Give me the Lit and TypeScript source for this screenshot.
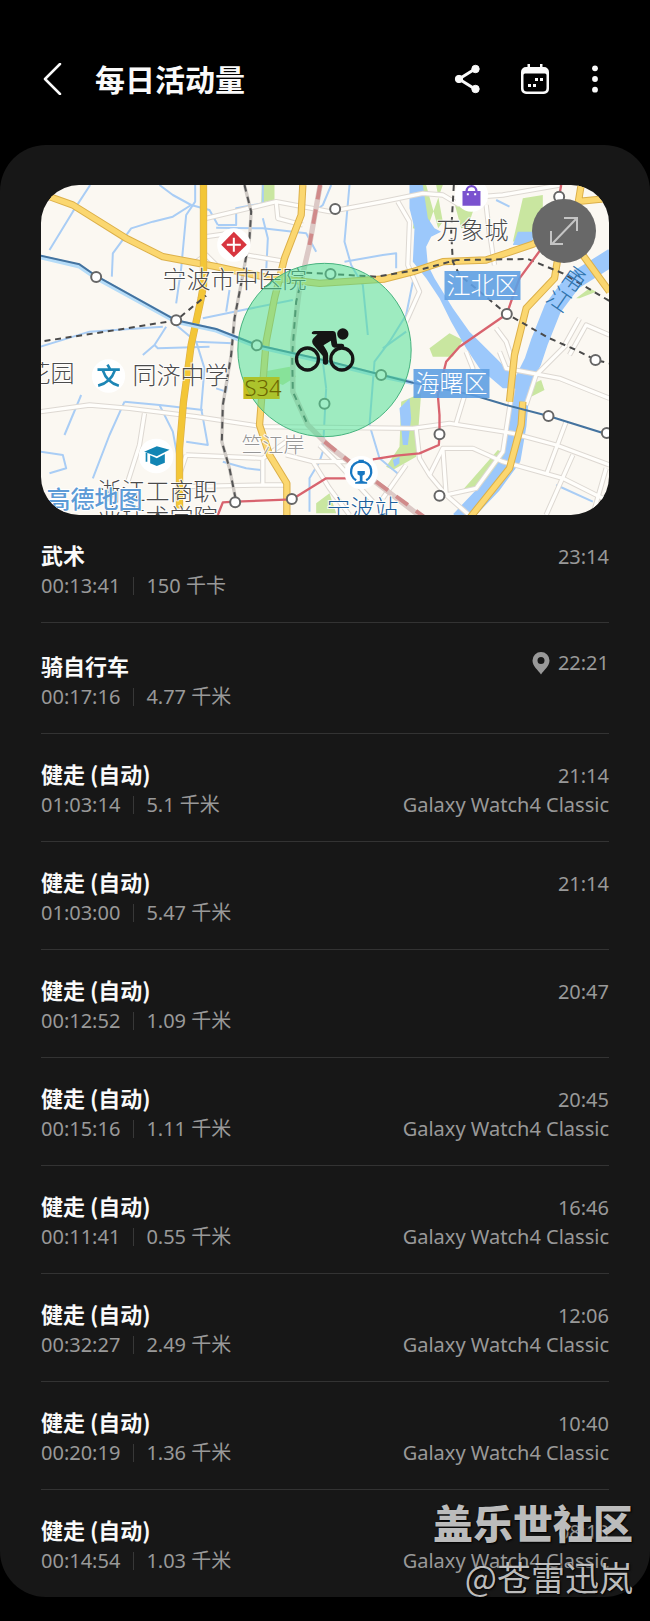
import { LitElement, html, css, svg, nothing } from "lit";
import { customElement, property } from "lit/decorators.js";

interface Activity {
  name: string;
  duration: string;
  amount: string;
  time: string;
  device?: string;
  located?: boolean;
}

const WATCH = "Galaxy Watch4 Classic";
const WALK = "健走 (自动)";

const ACTIVITIES: Activity[] = [
  { name: "武术", duration: "00:13:41", amount: "150 千卡", time: "23:14" },
  { name: "骑自行车", duration: "00:17:16", amount: "4.77 千米", time: "22:21", located: true },
  { name: WALK, duration: "01:03:14", amount: "5.1 千米", time: "21:14", device: WATCH },
  { name: WALK, duration: "01:03:00", amount: "5.47 千米", time: "21:14" },
  { name: WALK, duration: "00:12:52", amount: "1.09 千米", time: "20:47" },
  { name: WALK, duration: "00:15:16", amount: "1.11 千米", time: "20:45", device: WATCH },
  { name: WALK, duration: "00:11:41", amount: "0.55 千米", time: "16:46", device: WATCH },
  { name: WALK, duration: "00:32:27", amount: "2.49 千米", time: "12:06", device: WATCH },
  { name: WALK, duration: "00:20:19", amount: "1.36 千米", time: "10:40", device: WATCH },
  { name: WALK, duration: "00:14:54", amount: "1.03 千米", time: "08:18", device: WATCH },
];

@customElement("activity-map")
export class ActivityMap extends LitElement {
  static styles = css`
    :host {
      display: block;
      position: relative;
      overflow: hidden;
      border-radius: 38px;
      background: #fbf8f2;
      aspect-ratio: 568 / 330;
    }
    .map {
      display: block;
      width: 100%;
      height: 100%;
    }
    .river { fill: #9cc8fb; }
    .flow { fill: none; stroke: #9cc8fb; stroke-width: 52; stroke-linejoin: round; }
    .park { fill: #c9e6a0; }
    .stream { fill: none; stroke: #a9cdf5; stroke-width: 6; stroke-linejoin: round; }
    .lane-edge { fill: none; stroke: #ddd8d2; stroke-width: 16; stroke-linejoin: round; }
    .lane { fill: none; stroke: #fffefb; stroke-width: 10; stroke-linejoin: round; }
    .road-edge { fill: none; stroke: #dcb04a; stroke-width: 22; stroke-linejoin: round; }
    .road { fill: none; stroke: #fbd770; stroke-width: 16; stroke-linejoin: round; }
    .road-strong { fill: none; stroke: #f3c636; stroke-width: 18; stroke-linejoin: round; }
    .rail-edge { fill: none; stroke: #cfcac5; stroke-width: 10; }
    .rail { fill: none; stroke: #555; stroke-width: 6; stroke-dasharray: 20 16; }
    .rail-red-edge { fill: none; stroke: #dcc9c6; stroke-width: 16; }
    .rail-red { fill: none; stroke: #d08a8a; stroke-width: 12; stroke-dasharray: 44 30; }
    .metro-blue-edge { fill: none; stroke: #b5dcf8; stroke-width: 14; }
    .metro-blue { fill: none; stroke: #44739f; stroke-width: 6; stroke-linejoin: round; }
    .metro-red { fill: none; stroke: #d8636e; stroke-width: 7; stroke-linejoin: round; }
    .metro-dash { fill: none; stroke: #4a4a4a; stroke-width: 6; stroke-dasharray: 18 14; }
    .stop { fill: #fff; stroke: #666; stroke-width: 6; }
    .badge { fill: #fff; }
    .range { fill: #4cdf94; fill-opacity: 0.53; stroke: #45b27d; stroke-width: 3; }
    .rider { fill: #151515; }
    .wheel { fill: none; stroke: #151515; stroke-width: 10; }
    text {
      font-family: "Noto Sans CJK SC", sans-serif;
      font-size: 24px;
      font-weight: 300;
      fill: #4b4b4b;
      paint-order: stroke;
      stroke: #fff;
      stroke-opacity: 0.8;
      stroke-width: 2px;
    }
    .district { fill: #fff; stroke: none; }
    .district-box { fill: #5e9fe2; fill-opacity: 0.9; }
    .place { font-size: 21px; fill: #969696; }
    .station { fill: #1b5f9c; }
    .water { fill: #2f73ac; stroke: none; }
    .route { font-family: "Noto Sans", sans-serif; font-size: 22px; fill: #6b6500; stroke: none; }
    .brand { font-weight: 500; fill: #5d9bd6; stroke-opacity: 1; }
    .expand {
      position: absolute;
      top: 14px;
      right: 13px;
      width: 64px;
      height: 64px;
      padding: 0;
      border: 0;
      border-radius: 50%;
      background: #686868;
      color: #c4c4c4;
    }
    .expand svg { display: block; width: 64px; height: 64px; }
  `;

  private streams = [
    "M182 30L130 110L60 225", "M390 30L430 60L485 90L540 105L565 150", "M497 30L497 80L470 120L455 280L440 385",
    "M485 90L430 125L370 140L305 160L250 235L247 305", "M565 150L620 150L620 100L700 85L700 30",
    "M560 158L700 160L830 175L860 230", "M700 130L715 190L710 290", "M600 345L590 410", "M520 430L640 405L790 375",
    "M33 515L180 470L400 455", "M410 455L375 510L340 540", "M440 450L500 500L610 505", "M500 500L525 580L515 700L535 810L470 800",
    "M375 510L385 520L540 515", "M155 660L105 780", "M285 680L240 780L190 910", "M285 680L390 690L430 770L445 850",
    "M390 690L520 705", "M33 830L100 840L110 880L60 895", "M580 860L650 880L695 885L695 920", "M560 640L590 650L600 560",
    "M905 30L880 90L855 110", "M960 30L945 200L965 270L1000 330L1015 480", "M945 260L1060 240L1100 235L1100 280",
    "M1150 320L1130 420L1080 500L1035 560L1020 750L1050 850L1110 900", "M1060 520L1130 470", "M890 640L880 830L870 860",
    "M870 860L840 910L840 1010", "M880 560L890 640", "M1400 75L1440 95", "M1580 930L1690 980",
  ];

  private lanes = [
    "M530 130L740 80L900 110L1060 80L1180 55L1240 60L1290 90", "M740 80L745 130L820 150", "M530 185L600 175M650 240L770 260",
    "M1105 80L1140 140L1135 270L1170 350L1130 440", "M1290 70L1420 60L1590 30", "M1370 90L1380 180M1395 270L1380 170",
    "M33 710L180 690L300 700L500 725L700 755L1150 760L1260 745L1450 775L1580 810L1740 870", "M345 715L330 810L295 920",
    "M470 840L700 850L770 800M470 840L450 900M700 850L700 930L460 935M700 930L780 930", "M870 810L930 870L1030 980",
    "M770 840L850 860L900 940L960 1020", "M850 860L960 860M1060 970L1130 870", "M1160 760L1170 850L1200 900L1250 960",
    "M1200 900L1240 820L1330 820L1420 860L1600 910L1740 980", "M1250 960L1330 1030M1250 960L1240 820M1250 960L1340 940L1420 830L1440 700L1450 640",
    "M1410 530L1430 580L1590 610L1740 670", "M1310 530L1330 580L1280 745", "M1610 510L1520 600L1490 690", "M1400 460L1430 500L1450 560",
    "M1610 740L1550 900M1630 840L1550 1020M1730 880L1690 1020M1620 540L1670 450L1740 480M1600 520L1650 430", "M500 260L530 240L560 270",
  ];

  private art() {
    return svg`
      <g transform="translate(-11 -10) scale(0.33333)">
        <path class="park" d="M697 30h38v45l-40 8zM1190 30l30 0 20 110-14 20zM1240 30L1170 30 1150 160 1190 170zM1275 85l65-5-25 75-20 5zM1480 70l60-10v130h-60l-30 10zM1200 520l60-45 40 20-30 50-60 0zM1115 680l60-25-15 190-70 40-20-10 40-60zM1295 950l110-125 40 20-80 80zM1640 370l40-30 20 10-50 20zM1490 635l45-20 10 30-40 20zM860 985l40-30 20 60h-60zM700 590l80-15 20 30-40 25-50-20z"/>
        <path class="river" d="M1140 30L1180 30 1195 130 1215 160 1235 170 1205 185 1190 215 1195 270 1215 310 1270 400 1320 470 1400 550 1460 610 1480 640 1420 640 1350 580 1310 520 1265 440 1230 370 1190 310 1150 260 1155 160 1140 100z"/>
        <path class="flow" d="M1750 245L1630 320 1570 400 1530 500 1510 560 1475 630 1465 750 1448 850 1390 930 1290 1035"/>
        <path class="river" d="M1465 170h45v40h-60zM1110 700l30-30 5 60-10 80-15 0zM1090 855l20-10v20l-15 10z"/>
        ${this.streams.map((d) => svg`<path class="stream" d=${d}/>`)}
        ${this.lanes.map((d) => svg`<path class="lane-edge" d=${d}/>`)}
        ${this.lanes.map((d) => svg`<path class="lane" d=${d}/>`)}
        <path class="rail-edge" d="M645 30L665 110 660 190 640 300 615 430 605 540 580 690 577 800 600 880 620 980"/>
        <path class="rail" d="M645 30L665 110 660 190 640 300 615 430 605 540 580 690 577 800 600 880 620 980"/>
        <path class="rail-red-edge" d="M872 30L840 210 810 340 790 500 790 650 835 750 900 815 1180 1030"/>
        <path class="rail-red" d="M872 30L840 210M885 800L960 860M1040 920L1190 1030"/>
        <path class="rail" d="M820 300L800 380 788 540 790 650 835 750"/>
        <path class="road-edge" d="M60 65L130 90 290 190 400 245 560 275 700 305 870 325 1065 312 1150 290 1240 260 1370 255 1510 208 1560 170M820 30L815 120 765 250 735 370 710 500 690 750 720 840 772 925 772 1030M1740 350L1660 240M1655 30L1640 120 1590 220 1575 310 1490 400 1455 540 1440 680M1480 680L1475 750 1440 880 1320 1030M1640 80L1740 70"/>
        <path class="road" d="M60 65L130 90 290 190 400 245 560 275 700 305 870 325 1065 312 1150 290 1240 260 1370 255 1510 208 1560 170M820 30L815 120 765 250 735 370 710 500 690 750 720 840 772 925 772 1030M1740 350L1660 240M1655 30L1640 120 1590 220 1575 310 1490 400 1455 540 1440 680M1480 680L1475 750 1440 880 1320 1030M1640 80L1740 70"/>
        <path class="road-edge" d="M522 30L522 330 515 370 485 510 462 680 450 820 450 1000"/>
        <path class="road-strong" d="M522 30L522 330 515 370 485 510 462 680 450 820 450 1000"/>
        <path class="metro-blue-edge" d="M33 246L150 274 200 308 440 440 560 466 682 514 885 560 1055 603 1150 623"/>
        <path class="metro-blue" d="M33 242L150 268 200 303 440 436 560 462 682 510 885 556 1055 599 1150 623 1330 660 1430 690 1557 723 1740 780"/>
        <path class="metro-dash" d="M45 498L260 465 440 436 530 362M830 293L890 296 1040 305 1180 282 1280 255 1495 252 1600 295 1740 378M1273 30L1265 170 1270 260 1290 300 1432 417 1560 490 1640 525 1698 555 1740 565"/>
        <path class="metro-red" d="M1595 30L1589 65M1540 215L1470 310 1455 350 1432 417 1290 515 1250 560 1225 660 1230 720 1230 778 1228 810 1170 835 1100 842 1030 853M960 910L890 910 788 973 617 980 580 982 565 1020"/>
        ${[[200, 306], [440, 436], [682, 511], [917, 102], [903, 297], [1589, 65], [1432, 417], [1055, 600], [885, 686], [1557, 723], [1698, 555], [1732, 774], [1230, 778], [1230, 962], [617, 982], [787, 972]].map(
          ([x, y]) => svg`<circle class="stop" cx=${x} cy=${y} r="15"/>`,
        )}
        <circle class="badge" cx="613" cy="210" r="50"/>
        <path fill="#d8353f" d="M613 170l39 39-39 38-38-38z"/>
        <path stroke="#fff" stroke-width="6" d="M613 188v42M592 209h42"/>
        <circle class="badge" cx="1326" cy="60" r="50"/>
        <path fill="#7a52cf" d="M1299 48h54v44h-54z"/>
        <path fill="none" stroke="#7a52cf" stroke-width="7" d="M1311 50c0-22 30-22 30 0"/>
        <path fill="#fff" d="M1312 55h6v6h-6zM1334 55h6v6h-6z"/>
        <circle class="badge" cx="237" cy="603" r="50"/>
        <path fill="none" stroke="#1d86b5" stroke-width="8" d="M234 569l8 14M204 584h67M220 586c8 24 26 40 48 46M256 586c-8 24-26 40-50 46"/>
        <circle class="badge" cx="380" cy="843" r="52"/>
        <path fill="#1285b4" d="M344 830l38-16 38 10-38 20zM362 841l20 9 24-13v26l-24 10-20-8z"/>
        <path stroke="#1285b4" stroke-width="5" d="M351 834v26"/>
        <circle class="badge" cx="995" cy="893" r="50"/>
        <path fill="none" stroke="#1777c2" stroke-width="7" d="M980 916c-24-14-20-54 15-56c35 2 39 42 15 56"/>
        <path fill="#1777c2" d="M987 854h16v10h-16zM984 888h22v10l-7 4v16l14 4v4h-36v-4l14-4v-16l-7-4z"/>
      </g>`;
  }

  render() {
    return html`
      <svg class="map" viewBox="0 0 569 330" preserveAspectRatio="xMidYMid slice" role="img" aria-label="高德地图">
        ${this.art()}
        <text x="122" y="103">宁波市中医院</text>
        <text x="396" y="54">万象城</text>
        <text x="-14" y="197">花园</text>
        <text x="92" y="199">同济中学</text>
        <text class="place" x="201" y="267">竺江岸</text>
        <text x="57" y="315">浙江工商职</text>
        <text x="57" y="341">业技术学院</text>
        <text class="brand" x="6" y="323">高德地图</text>
        <text class="station" x="286" y="332">宁波站</text>
        <text class="water" transform="translate(519 94) rotate(35)">甬</text>
        <text class="water" transform="translate(504 115) rotate(35)">江</text>
        <rect x="203" y="192" width="36" height="22" fill="#f5b83a" />
        <rect class="district-box" x="404" y="86" width="76" height="29" />
        <text class="district" x="406" y="109">江北区</text>
        <rect class="district-box" x="373" y="184" width="76" height="29" />
        <text class="district" x="375" y="207">海曙区</text>
        <g transform="translate(-11 -10) scale(0.33333)">
          <circle class="range" cx="885" cy="525" r="260" />
          <circle class="wheel" cx="834" cy="552" r="33" />
          <circle class="wheel" cx="937" cy="552" r="33" />
          <circle class="rider" cx="940" cy="477" r="17" />
          <path class="rider" d="M856 468h54q8 0 9 8l4 30h14q7 0 7 6t-7 6h-22q-7 0-9-8l-2-13-22 14 10 16q4 6 4 14v20q0 8-8 8t-8-8v-18l-28-33q-8-11 0-20l12-12h-12q-8-1-4-7 3-3 8-3z" />
        </g>
        <rect x="203" y="192" width="36" height="22" fill="#b3bf12" fill-opacity="0.7" />
        <text class="route" x="204" y="211">S34</text>
      </svg>
      <button class="expand" aria-label="展开地图">
        <svg viewBox="0 0 64 64" fill="none" stroke="currentColor" stroke-width="2" aria-hidden="true">
          <path d="M20 45L44 20M32 19h13v13M19 32v13h12" />
        </svg>
      </button>
    `;
  }
}

@customElement("activity-row")
export class ActivityRow extends LitElement {
  @property({ attribute: false }) item!: Activity;

  static styles = css`
    :host { display: block; }
    .row {
      display: flex;
      justify-content: space-between;
      padding: 24px 0 22px;
      color: #999;
      font-size: 20px;
      line-height: 28px;
    }
    .located { padding-top: 27px; }
    .name {
      margin: 0;
      color: #fafafa;
      font-family: "Noto Sans CJK SC", sans-serif;
      font-size: 22px;
      font-weight: 700;
      line-height: 30px;
    }
    .facts { display: flex; align-items: center; margin-top: 3px; }
    .amount {
      margin-left: 13px;
      padding-left: 13px;
      background: linear-gradient(#383838, #383838) 0 center / 1px 18px no-repeat;
    }
    .side { display: flex; flex-direction: column; align-items: flex-end; padding-top: 3px; }
    .when { display: flex; align-items: center; gap: 8px; line-height: 30px; }
    .located .side { padding-top: 0; margin-top: -2px; }
    .pin { width: 18px; height: 24px; }
  `;

  render() {
    const a = this.item;
    return html`
      <div class="row ${a.located ? "located" : ""}">
        <div>
          <h2 class="name">${a.name}</h2>
          <div class="facts"><span>${a.duration}</span><span class="amount">${a.amount}</span></div>
        </div>
        <div class="side">
          <div class="when">
            ${a.located
              ? html`<svg class="pin" viewBox="0 0 18 24" aria-hidden="true">
                  <path fill="#999" fill-rule="evenodd" d="M9 1a8.5 8.5 0 0 1 8.5 8.5C17.5 15 12 19 9 23.500C6 19 .5 15 .5 9.500A8.500 8.500 0 0 1 9 1zM9 6a3.5 3.5 0 1 0 0 7a3.500 3.500 0 0 0 0-7z" />
                </svg>`
              : nothing}
            <time>${a.time}</time>
          </div>
          ${a.device ? html`<span>${a.device}</span>` : nothing}
        </div>
      </div>
    `;
  }
}

@customElement("app-root")
export class AppRoot extends LitElement {
  static styles = css`
    :host {
      display: block;
      position: relative;
      padding-bottom: 26px;
      background: #000;
      color: #fafafa;
      font-family: "Noto Sans", "Noto Sans CJK SC", sans-serif;
    }
    .bar {
      display: flex;
      align-items: center;
      padding: 56px 41px 43px 31px;
    }
    .title {
      flex: 1;
      margin: 0 0 0 20px;
      padding-bottom: 2px;
      font-family: "Noto Sans CJK SC", sans-serif;
      font-size: 30px;
      font-weight: 700;
      line-height: 44px;
    }
    .tools { display: flex; gap: 24px; }
    .icon {
      display: flex;
      align-items: center;
      justify-content: center;
      width: 44px;
      height: 44px;
      padding: 0;
      border: 0;
      background: none;
      color: #fafafa;
    }
    .more { width: 28px; }
    .icon svg { flex: none; width: 32px; height: 32px; }
    .panel {
      padding: 40px 41px 0;
      border-radius: 46px;
      background: #171717;
    }
    .list { margin: 0; padding: 0; list-style: none; }
    .list li + li { border-top: 1px solid #333; }
    .mark {
      position: absolute;
      right: 17px;
      bottom: 19px;
      display: flex;
      flex-direction: column;
      align-items: flex-end;
      color: rgba(214, 214, 214, 0.88);
      font-family: "Noto Sans CJK SC", sans-serif;
      text-shadow: 1px 1px 2px #000;
      pointer-events: none;
    }
    .community { font-size: 40px; font-weight: 900; line-height: 56px; }
    .author { font-size: 34px; line-height: 54px; }
  `;

  render() {
    return html`
      <header class="bar">
        <button class="icon" aria-label="返回">
          <svg viewBox="0 0 32 32" fill="none" stroke="currentColor" stroke-width="2.5" stroke-linecap="round" stroke-linejoin="round">
            <path d="M23 1L8 16L23 31" />
          </svg>
        </button>
        <h1 class="title">每日活动量</h1>
        <div class="tools">
          <button class="icon" aria-label="分享">
            <svg viewBox="0 0 32 32" fill="currentColor" stroke="currentColor">
              <path fill="none" stroke-width="3" d="M24 6L8 16L24 26" />
              <circle cx="24.5" cy="6" r="3.7" /><circle cx="8" cy="16" r="3.7" /><circle cx="24.5" cy="26" r="3.7" />
            </svg>
          </button>
          <button class="icon" aria-label="日历">
            <svg viewBox="0 0 32 32" fill="currentColor">
              <path fill-rule="evenodd" d="M8.500 1h2.500v3h10V1h2.500v3h1.500a5 5 0 0 1 5 5v17a5 5 0 0 1-5 5H7a5 5 0 0 1-5-5V9a5 5 0 0 1 5-5h1.500zM6 10.500a1.500 1.500 0 0 0-1.500 1.500v13a3.500 3.500 0 0 0 3.500 3.500h16a3.500 3.500 0 0 0 3.500-3.500V12a1.500 1.500 0 0 0-1.500-1.500z" />
              <path d="M16 15h3v3h-3zM21 15h3v3h-3zM9 21h3v3h-3zM14 21h3v3h-3z" />
            </svg>
          </button>
          <button class="icon more" aria-label="更多">
            <svg viewBox="0 0 32 32" fill="currentColor">
              <circle cx="16" cy="5.3" r="2.9" /><circle cx="16" cy="16" r="2.9" /><circle cx="16" cy="26.7" r="2.9" />
            </svg>
          </button>
        </div>
      </header>
      <main class="panel">
        <activity-map></activity-map>
        <ul class="list">
          ${ACTIVITIES.map((a) => html`<li><activity-row .item=${a}></activity-row></li>`)}
        </ul>
      </main>
      <div class="mark">
        <span class="community">盖乐世社区</span>
        <span class="author">@苍雷迅岚</span>
      </div>
    `;
  }
}
